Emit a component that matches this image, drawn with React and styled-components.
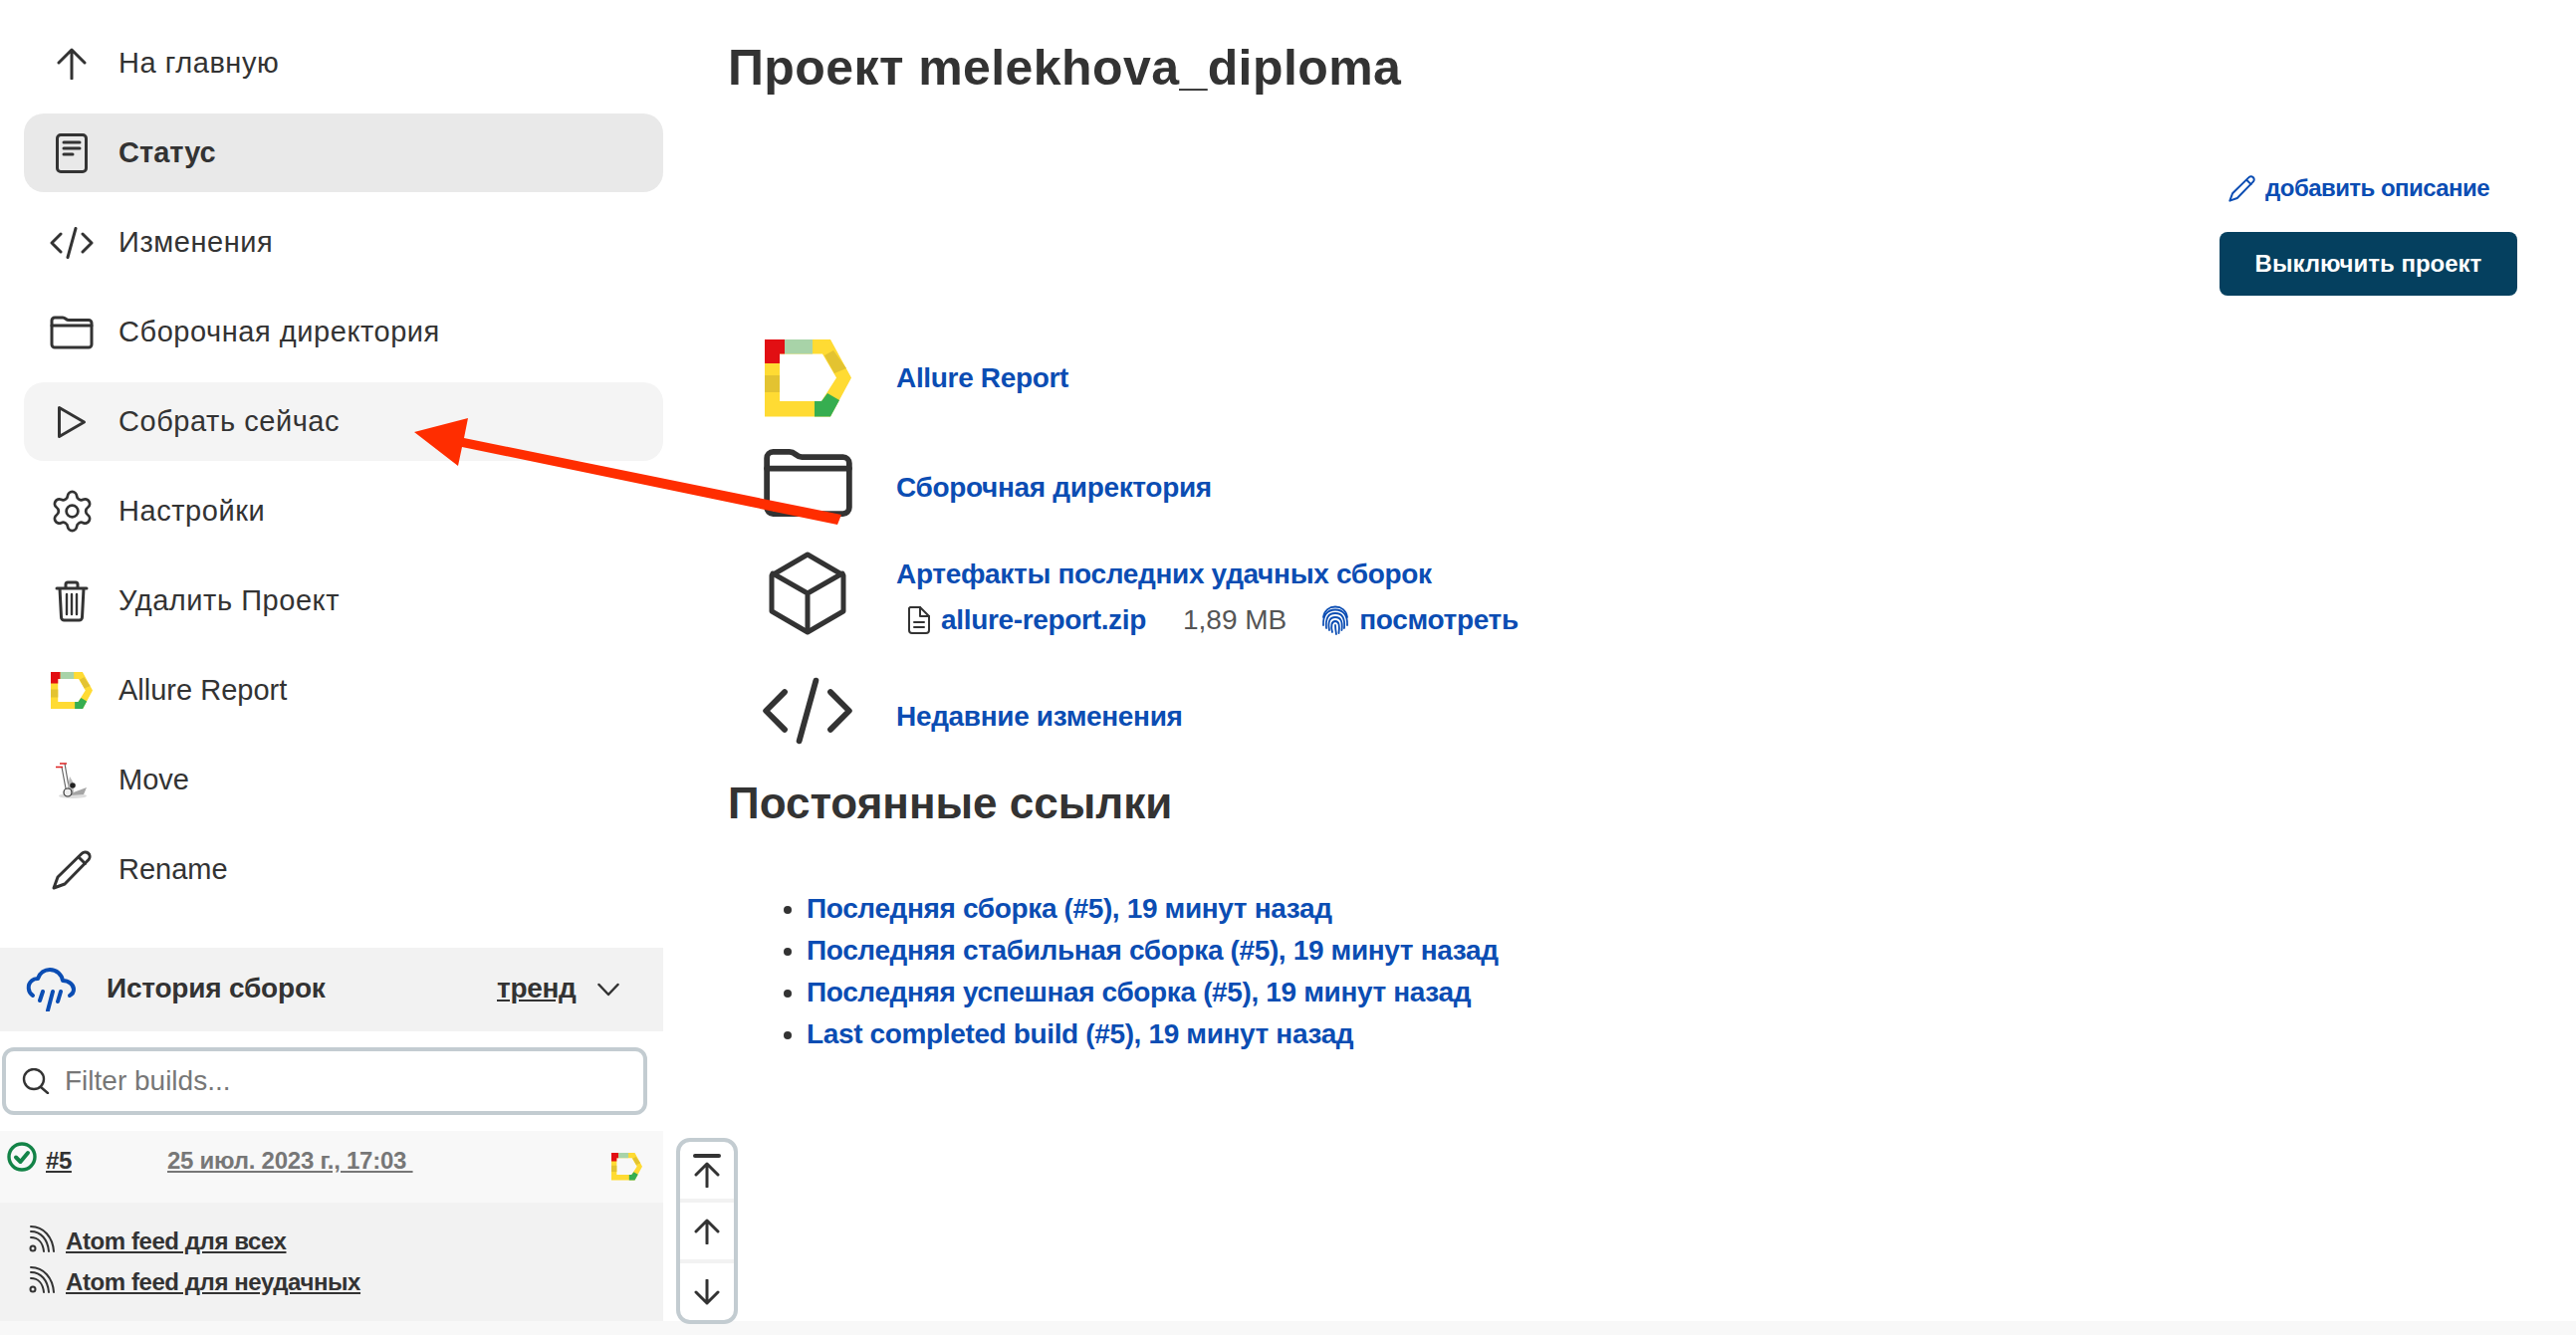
import React from "react";
import styled, { createGlobalStyle } from "styled-components";
import { Settings } from "lucide-react";

const Global = createGlobalStyle`
  html, body { margin: 0; padding: 0; background: #fff; }
  body { font-family: "Liberation Sans", Arial, sans-serif; color: #333; }
  * { box-sizing: border-box; }
`;

const LINK = "#0b4db3";
const INK = "#333";

const Page = styled.div`
  position: relative;
  width: 2587px;
  height: 1341px;
  overflow: hidden;
  display: flex;
  flex-direction: column;
`;
const Content = styled.div`
  flex: 1;
  display: flex;
  min-height: 0;
`;
const Footer = styled.div`
  height: 14px;
  background: #f8f8f8;
`;
const Sidebar = styled.aside`
  width: 666px;
  flex: none;
  display: flex;
  flex-direction: column;
`;
const Nav = styled.nav`
  display: flex;
  flex-direction: column;
  gap: 11px;
  padding: 24px 0 39px 24px;
`;
const NavItem = styled.a`
  height: 79px;
  border-radius: 20px;
  display: flex;
  align-items: center;
  padding-left: 18px;
  gap: 17px;
  font-size: 29px;
  letter-spacing: ${(p) => (p.$latin ? "0" : "0.55px")};
  color: ${INK};
  font-weight: ${(p) => (p.$active ? 700 : 400)};
  background: ${(p) => (p.$active ? "#e9e9e9" : p.$hover ? "#f4f4f4" : "transparent")};
`;
const IconBox = styled.span`
  width: 60px;
  display: flex;
  justify-content: center;
  align-items: center;
  flex: none;
`;
const HistoryHeader = styled.div`
  height: 84px;
  background: #f2f2f2;
  display: flex;
  align-items: center;
  padding-left: 26px;
`;
const HistoryTitle = styled.span`
  margin-left: 31px;
  padding-bottom: 2px;
  font-size: 28px;
  font-weight: 700;
  letter-spacing: -0.2px;
  width: 392px;
`;
const Trend = styled.span`
  padding-bottom: 2px;
  font-size: 28px;
  font-weight: 700;
  text-decoration: underline;
  margin-right: 21px;
  letter-spacing: -0.3px;
`;
const SearchWrap = styled.div`
  padding: 16px 16px 16px 2px;
`;
const SearchBox = styled.div`
  height: 68px;
  border: 4px solid #c3ccd1;
  border-radius: 12px;
  display: flex;
  align-items: center;
  padding-left: 16px;
  gap: 15px;
  background: #fff;
  font-size: 28px;
  color: #777;
`;
const BuildRow = styled.div`
  height: 72px;
  background: #f8f8f8;
  display: flex;
  padding: 11px 21px 0 7px;
  align-items: flex-start;
  font-size: 24px;
`;
const BuildNum = styled.a`
  margin-left: 9px;
  margin-top: 5px;
  width: 122px;
  font-weight: 700;
  color: ${INK};
  text-decoration: underline;
  letter-spacing: -0.4px;
`;
const BuildDate = styled.a`
  margin-top: 5px;
  flex: 1;
  color: #777;
  font-weight: 700;
  text-decoration: underline;
  letter-spacing: -0.25px;
  white-space: pre;
`;
const BuildLogo = styled.span`
  margin-top: 11px;
  display: flex;
`;
const Feeds = styled.div`
  flex: 1;
  background: #f2f2f2;
  padding: 21px 0 0 29px;
  display: flex;
  flex-direction: column;
  gap: 5px;
`;
const Feed = styled.a`
  display: flex;
  align-items: center;
  gap: 11px;
  height: 36px;
  font-size: 24px;
  font-weight: 700;
  color: ${INK};
  letter-spacing: -0.42px;
  text-decoration: underline;
`;
const FeedIcon = styled.span`
  display: flex;
  margin-bottom: 5px;
`;
const Main = styled.main`
  flex: 1;
  padding: 0 59px 0 65px;
  display: flex;
  flex-direction: column;
`;
const Title = styled.h1`
  margin: 39px 0 0;
  font-size: 50px;
  line-height: 58px;
  font-weight: 700;
  letter-spacing: 0.42px;
  color: ${INK};
`;
const Actions = styled.div`
  margin-top: 76px;
  display: flex;
  flex-direction: column;
  align-items: flex-end;
`;
const AddDesc = styled.a`
  display: flex;
  align-items: center;
  gap: 10px;
  margin-right: 28px;
  font-size: 24px;
  font-weight: 700;
  color: ${LINK};
  height: 32px;
  letter-spacing: -0.55px;
`;
const PrimaryButton = styled.button`
  margin-top: 28px;
  width: 299px;
  height: 64px;
  border: none;
  border-radius: 8px;
  background: #05405f;
  color: #fff;
  font: 700 24px "Liberation Sans", Arial, sans-serif;
  letter-spacing: 0;
`;
const Tasks = styled.div`
  margin-top: 28px;
  display: flex;
  flex-direction: column;
`;
const Task = styled.div`
  height: ${(p) => p.$h}px;
  display: grid;
  grid-template-columns: 169px 1fr;
  align-items: center;
`;
const TaskIcon = styled.span`
  display: flex;
  justify-content: center;
  width: 100px;
  margin-left: 30px;
`;
const TaskLink = styled.a`
  font-size: 28px;
  font-weight: 700;
  color: ${LINK};
  letter-spacing: -0.33px;
  display: block;
  padding-top: ${(p) => p.$pt || 0}px;
`;
const ArtifactBlock = styled.div`
  padding-top: 8px;
`;
const ArtifactRow = styled.div`
  display: flex;
  align-items: center;
  margin-top: 14px;
  margin-left: 11px;
`;
const FileLink = styled.a`
  margin-left: 10px;
  font-size: 28px;
  font-weight: 700;
  color: ${LINK};
  letter-spacing: -0.33px;
`;
const FileSize = styled.span`
  margin-left: 37px;
  margin-right: 35px;
  font-size: 28px;
  color: #555;
`;
const SubHeading = styled.h2`
  margin: 11px 0 0;
  font-size: 44px;
  line-height: 50px;
  font-weight: 700;
  color: ${INK};
`;
const Permalinks = styled.ul`
  margin: 60px 0 0;
  padding: 0 0 0 79px;
  list-style: disc;
`;
const Permalink = styled.li`
  height: 42px;
  line-height: 42px;
  font-size: 28px;
  color: ${INK};
`;
const PermaA = styled.a`
  color: ${LINK};
  font-weight: 700;
  letter-spacing: -0.36px;
`;
const ScrollWidget = styled.div`
  position: absolute;
  left: 679px;
  top: 1143px;
  width: 62px;
  height: 187px;
  border: 4px solid #c3ccd1;
  border-radius: 14px;
  background: #fff;
  display: flex;
  flex-direction: column;
  overflow: hidden;
`;
const ScrollBtn = styled.div`
  flex: 1;
  display: flex;
  align-items: center;
  justify-content: center;
  & + & { border-top: 4px solid #f2f2f2; }
`;
const Overlay = styled.svg`
  position: absolute;
  left: 0;
  top: 0;
  pointer-events: none;
`;

const S = { fill: "none", stroke: INK, strokeWidth: 3, strokeLinecap: "round", strokeLinejoin: "round" };

const ArrowUp = () => (
  <svg width="30" height="32" viewBox="0 0 30 32" {...S}><path d="M15 2v29M2 15 15 2l13 13" /></svg>
);
const Doc = () => (
  <svg width="32" height="40" viewBox="0 0 32 40" {...S}>
    <rect x="1.500" y="1.500" width="29" height="37" rx="3.500" />
    <path d="M8 9h16M8 15h16M8 21h9" />
  </svg>
);
const Code = ({ w = 44, h = 32, sw = 3 }) => (
  <svg width={w} height={h} viewBox="0 0 44 32" {...S} strokeWidth={sw}>
    <path d="M11 7 2 16l9 9M33 7l9 9-9 9M26 1.500 18 30.500" />
  </svg>
);
const Folder = ({ w = 44, h = 34, sw = 3 }) => (
  <svg width={w} height={h} viewBox="0 0 44 34" {...S} strokeWidth={sw}>
    <path d="M2 5a3 3 0 0 1 3-3h8c3 0 3 2.500 6 2.500h20a3 3 0 0 1 3 3V29a3 3 0 0 1-3 3H5a3 3 0 0 1-3-3Z" />
    <path d="M2 10h40" />
  </svg>
);
const Play = () => (
  <svg width="30" height="34" viewBox="0 0 30 34" {...S}><path d="M2.500 2.500v29L27.500 17Z" /></svg>
);
const Trash = () => (
  <svg width="34" height="42" viewBox="0 0 34 42" {...S}>
    <path d="M2 8h30M5 8l1.500 29a3 3 0 0 0 3 3h15a3 3 0 0 0 3-3L29 8M11 8V4a2 2 0 0 1 2-2h8a2 2 0 0 1 2 2v4" />
    <path d="M12 14v20M17 14v20M22 14v20" strokeWidth="2.400" />
  </svg>
);
const Pencil = ({ size = 40, color = INK, sw = 3 }) => (
  <svg width={size} height={size} viewBox="0 0 40 40" {...S} stroke={color} strokeWidth={sw}>
    <path d="M2 38 6 27 30 3.500a4.500 4.500 0 0 1 7 6L13 34Z" />
    <path d="M27 7l6.500 6.500" />
  </svg>
);
const AllureLogo = ({ w = 42 }) => (
  <svg width={w} height={(w * 77.5) / 87} viewBox="0 0 87 77.500">
    <path fillRule="evenodd" fill="#ffdb33" d="M0 0H66L87 38.500 66 77.500H0ZM15 14.500V62H57L72 38.500 58 14.500Z" />
    <path fill="#e20f13" d="M0 0H20V14.500H15V24H0Z" />
    <path fill="#a8d3a8" d="M20 0H48V14.500H20Z" />
    <path fill="#e3c331" d="M0 36H15V53H0ZM60 16 69 11 82 29 70 34Z" />
    <path fill="#36ae50" d="M50 62H57L63 54 75 61 66 77.500H50Z" />
  </svg>
);
const HandTruck = () => (
  <svg width="32" height="40" viewBox="0 0 32 40">
    <ellipse cx="17" cy="35.500" rx="14" ry="2.500" fill="#ddd" />
    <path d="M9 3 14 32M6 6.500 10 28" stroke="#666" strokeWidth="1.200" fill="none" />
    <path d="M11 31 14 16l3 5 1 11Z" fill="#bbb" />
    <circle cx="17" cy="25" r="2.800" fill="#222" />
    <path d="M15 33 31 27l-3 7-13 1Z" fill="#a5a5a5" />
    <circle cx="12" cy="32" r="4" fill="#eee" stroke="#333" strokeWidth="1.200" />
    <path d="M4 3h7M0 6.500h7" stroke="#d22" strokeWidth="1.300" />
  </svg>
);
const Cube = () => (
  <svg width="78" height="84" viewBox="0 0 78 84" {...S} strokeWidth="5">
    <path d="M39 3 75 24V60L39 81 3 60V24Z" strokeLinejoin="round" />
    <path d="M4 22 39 42 74 22M39 42V80" />
  </svg>
);
const Rain = () => (
  <svg width="50" height="44" viewBox="0 0 50 44" fill="none" stroke={LINK} strokeWidth="4" strokeLinecap="round" strokeLinejoin="round">
    <path d="M7 28C2 25 1 17 6 13c2-2 4-2 6-2 2-6 7-9 12-9 7 0 12 5 13 11 6 0 11 4 11 9 0 3-2 5-4 6" />
    <path d="M17 24l-3 9M27 24l-5 19M35 24l-3 10" />
  </svg>
);
const Chevron = () => (
  <svg width="22" height="14" viewBox="0 0 22 14" fill="none" stroke={INK} strokeWidth="2.500" strokeLinecap="round" strokeLinejoin="round"><path d="M1.500 2 11 12l9.500-10" /></svg>
);
const SearchIcon = () => (
  <svg width="28" height="26" viewBox="0 0 28 26" fill="none" stroke={INK} strokeWidth="2.400" strokeLinecap="round"><circle cx="12" cy="11" r="10" /><path d="M19 19l7 6" /></svg>
);
const Check = () => (
  <svg width="30" height="30" viewBox="0 0 30 30" fill="none" stroke="#138347" strokeWidth="3.400" strokeLinecap="round" strokeLinejoin="round">
    <circle cx="15" cy="15" r="13" /><path d="M9 15.500l4.500 4.500L21 11" strokeWidth="4" />
  </svg>
);
const RssIcon = () => (
  <svg width="26" height="28" viewBox="0 0 26 28" fill="none" stroke={INK} strokeWidth="2" strokeLinecap="round">
    <circle cx="4" cy="23" r="2.500" /><path d="M2 12c7 0 12 5 13 14M2 6c10 0 17 8 18 20M2 1c13 0 22 11 23 25" />
  </svg>
);
const FileIcon = () => (
  <svg width="24" height="28" viewBox="0 0 24 28" {...S} strokeWidth="2">
    <path d="M3 1h10l9 9v14a3 3 0 0 1-3 3H5a3 3 0 0 1-3-3V2Z" /><path d="M13 1v9h9M7 16h10M7 21h10" />
  </svg>
);
const FingerprintIcon = () => (
  <svg width="28" height="31" viewBox="0 0 28 31" fill="none" stroke={LINK} strokeWidth="1.800" strokeLinecap="round">
    <path d="M2 12C3 5 8 1.500 14 1.500S25 5 26 12" />
    <path d="M2 20C1.500 10 6 4.500 14 4.500S26.500 10 26 20" />
    <path d="M5 23c-1-10 2-15 9-15s10 5 9 15" />
    <path d="M8 25c-1.500-8 0-13 6-13s7.500 5 6.500 13" />
    <path d="M11 27c-1.500-6-1-11 3-11s4.500 5 3.500 12" />
    <path d="M14 20c0 3 .5 6 1 9" />
  </svg>
);
const Top = () => (
  <svg width="28" height="34" viewBox="0 0 28 34" fill="none" stroke={INK} strokeWidth="3" strokeLinecap="round" strokeLinejoin="round">
    <path d="M2 2h24" strokeWidth="4" /><path d="M14 33V11M3 21 14 10l11 11" />
  </svg>
);
const Up = () => (
  <svg width="28" height="26" viewBox="0 0 28 26" fill="none" stroke={INK} strokeWidth="3" strokeLinecap="round" strokeLinejoin="round"><path d="M14 25V2M3 13 14 2l11 11" /></svg>
);
const Down = () => (
  <svg width="28" height="26" viewBox="0 0 28 26" fill="none" stroke={INK} strokeWidth="3" strokeLinecap="round" strokeLinejoin="round"><path d="M14 1v23M3 13l11 11 11-11" /></svg>
);

const navItems = [
  { label: "На главную", icon: <ArrowUp /> },
  { label: "Статус", icon: <Doc />, active: true, latin: true },
  { label: "Изменения", icon: <Code /> },
  { label: "Сборочная директория", icon: <Folder /> },
  { label: "Собрать сейчас", icon: <Play />, hover: true },
  { label: "Настройки", icon: <Settings size={47} strokeWidth={1.4} color={INK} /> },
  { label: "Удалить Проект", icon: <Trash /> },
  { label: "Allure Report", icon: <AllureLogo />, latin: true },
  { label: "Move", icon: <HandTruck />, latin: true },
  { label: "Rename", icon: <Pencil />, latin: true },
];

const permalinks = [
  "Последняя сборка (#5), 19 минут назад",
  "Последняя стабильная сборка (#5), 19 минут назад",
  "Последняя успешная сборка (#5), 19 минут назад",
  "Last completed build (#5), 19 минут назад",
];

export default function App() {
  return (
    <>
      <Global />
      <Page>
        <Content>
          <Sidebar>
            <Nav>
              {navItems.map((n) => (
                <NavItem key={n.label} $active={n.active} $hover={n.hover} $latin={n.latin}>
                  <IconBox>{n.icon}</IconBox>
                  {n.label}
                </NavItem>
              ))}
            </Nav>
            <HistoryHeader>
              <Rain />
              <HistoryTitle>История сборок</HistoryTitle>
              <Trend>тренд</Trend>
              <Chevron />
            </HistoryHeader>
            <SearchWrap>
              <SearchBox>
                <SearchIcon />
                Filter builds...
              </SearchBox>
            </SearchWrap>
            <BuildRow>
              <Check />
              <BuildNum>#5</BuildNum>
              <BuildDate>25 июл. 2023 г., 17:03 </BuildDate>
              <BuildLogo><AllureLogo w={31} /></BuildLogo>
            </BuildRow>
            <Feeds>
              <Feed><FeedIcon><RssIcon /></FeedIcon>Atom feed для всех</Feed>
              <Feed><FeedIcon><RssIcon /></FeedIcon>Atom feed для неудачных</Feed>
            </Feeds>
          </Sidebar>
          <Main>
            <Title>Проект melekhova_diploma</Title>
            <Actions>
              <AddDesc><Pencil size={27} color={LINK} sw={3} />добавить описание</AddDesc>
              <PrimaryButton>Выключить проект</PrimaryButton>
            </Actions>
            <Tasks>
              <Task $h={110}>
                <TaskIcon><AllureLogo w={87} /></TaskIcon>
                <TaskLink>Allure Report</TaskLink>
              </Task>
              <Task $h={100}>
                <TaskIcon><Folder w={91} h={72} sw={2.800} /></TaskIcon>
                <TaskLink $pt={10}>Сборочная директория</TaskLink>
              </Task>
              <Task $h={122}>
                <TaskIcon><Cube /></TaskIcon>
                <ArtifactBlock>
                  <TaskLink>Артефакты последних удачных сборок</TaskLink>
                  <ArtifactRow>
                    <FileIcon />
                    <FileLink>allure-report.zip</FileLink>
                    <FileSize>1,89 MB</FileSize>
                    <FingerprintIcon />
                    <FileLink>посмотреть</FileLink>
                  </ArtifactRow>
                </ArtifactBlock>
              </Task>
              <Task $h={114}>
                <TaskIcon><Code w={92} h={68} sw={2.800} /></TaskIcon>
                <TaskLink $pt={12}>Недавние изменения</TaskLink>
              </Task>
            </Tasks>
            <SubHeading>Постоянные ссылки</SubHeading>
            <Permalinks>
              {permalinks.map((t) => (
                <Permalink key={t}><PermaA>{t}</PermaA></Permalink>
              ))}
            </Permalinks>
          </Main>
        </Content>
        <Footer />
        <ScrollWidget>
          <ScrollBtn><Top /></ScrollBtn>
          <ScrollBtn><Up /></ScrollBtn>
          <ScrollBtn><Down /></ScrollBtn>
        </ScrollWidget>
        <Overlay width="2587" height="1341" viewBox="0 0 2587 1341">
          <polygon fill="#ff2d00" points="416,434 470,420 466,440 845,517 841,527 464,449 460,468" />
        </Overlay>
      </Page>
    </>
  );
}
